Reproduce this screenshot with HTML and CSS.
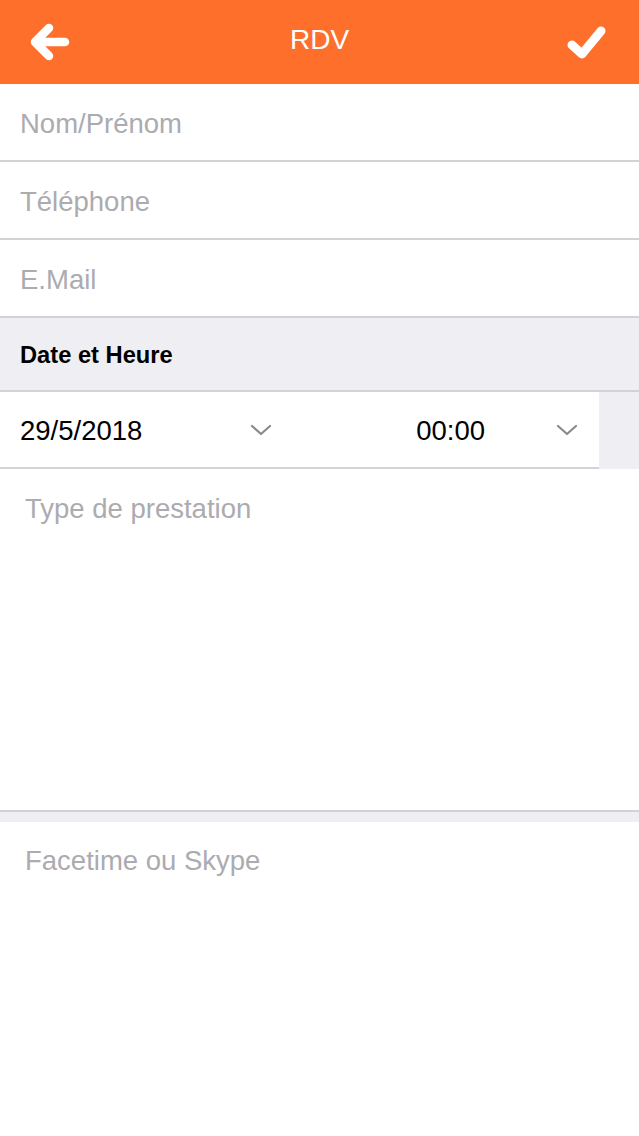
FILE: index.html
```html
<!DOCTYPE html>
<html lang="fr">
<head>
<meta charset="utf-8">
<title>RDV</title>
<link rel="stylesheet" href="styles.css">
</head>
<body>
<div class="app">
  <header class="navbar">
    <svg class="nav-icon back" width="60" height="60" viewBox="0 0 60 60" aria-hidden="true">
      <path d="M45 30 H16 M29 16 L15 30 L29 44" fill="none" stroke="#fff" stroke-width="8.5" stroke-linecap="round" stroke-linejoin="round"/>
    </svg>
    <div class="title">RDV</div>
    <svg class="nav-icon ok" width="60" height="60" viewBox="0 0 60 60" aria-hidden="true">
      <path d="M13 33 L23 42 L42 19" fill="none" stroke="#fff" stroke-width="9" stroke-linecap="round" stroke-linejoin="round"/>
    </svg>
  </header>

  <div class="field">Nom/Prénom</div>
  <div class="field">Téléphone</div>
  <div class="field">E.Mail</div>

  <div class="section">Date et Heure</div>

  <div class="datetime">
    <div class="dt-main">
      <div class="dt-date">
        <span class="dt-value">29/5/2018</span>
        <svg class="chev" width="22" height="12" viewBox="0 0 22 12" aria-hidden="true"><path d="M2 2 L11 10 L20 2" fill="none" stroke="#8a8a8e" stroke-width="2.2" stroke-linecap="round" stroke-linejoin="round"/></svg>
      </div>
      <div class="dt-time">
        <span class="dt-value time">00:00</span>
        <svg class="chev" width="22" height="12" viewBox="0 0 22 12" aria-hidden="true"><path d="M2 2 L11 10 L20 2" fill="none" stroke="#8a8a8e" stroke-width="2.2" stroke-linecap="round" stroke-linejoin="round"/></svg>
      </div>
    </div>
    <div class="dt-side"></div>
  </div>

  <div class="area prestation">Type de prestation</div>
  <div class="spacer"></div>
  <div class="area facetime">Facetime ou Skype</div>
</div>
</body>
</html>
```

FILE: styles.css
```css
* { box-sizing: border-box; }
html, body {
  margin: 0;
  padding: 0;
  background: #fff;
  font-family: "Liberation Sans", Arial, sans-serif;
}
.app {
  width: 639px;
  min-height: 1136px;
  display: flex;
  flex-direction: column;
}
.navbar {
  height: 84px;
  background: #fe6f2c;
  display: grid;
  grid-template-columns: 1fr auto 1fr;
  align-items: center;
  padding: 0 20px;
}
.nav-icon.back { justify-self: start; }
.nav-icon.ok { justify-self: end; }
.title {
  color: #fff;
  font-size: 28px;
  line-height: 32px;
  padding-bottom: 4px;
}
.field {
  height: 78px;
  border-bottom: 2px solid #d3d3d7;
  padding: 4px 20px 0;
  display: flex;
  align-items: center;
  font-size: 27.5px;
  color: #ababb0;
}
.section {
  height: 74px;
  background: #efeff3;
  border-bottom: 2px solid #d3d3d7;
  padding: 2px 20px 0;
  display: flex;
  align-items: center;
  font-size: 23.7px;
  font-weight: bold;
  color: #000;
}
.datetime {
  display: flex;
  height: 77px;
}
.dt-main {
  flex: 1;
  display: flex;
  border-bottom: 2px solid #d3d3d7;
  padding-top: 3px;
}
.dt-side {
  width: 40px;
  background: #efeff3;
}
.dt-date, .dt-time {
  width: 50%;
  display: flex;
  align-items: center;
  font-size: 27.5px;
  color: #000;
}
.dt-date {
  padding-left: 20px;
  padding-right: 28px;
  justify-content: space-between;
}
.dt-time {
  padding-right: 21px;
  justify-content: flex-end;
}
.dt-time .time {
  margin-right: 71px;
}
.chev { display: block; margin-top: -2px; }
.area {
  font-size: 27.5px;
  color: #ababb0;
  padding: 24px 25px 0;
  line-height: 32px;
}
.prestation {
  height: 343px;
  border-bottom: 2px solid #d3d3d7;
}
.spacer {
  height: 10px;
  background: #efeff3;
}
.facetime {
  flex: 1;
  padding-top: 23px;
}
```
